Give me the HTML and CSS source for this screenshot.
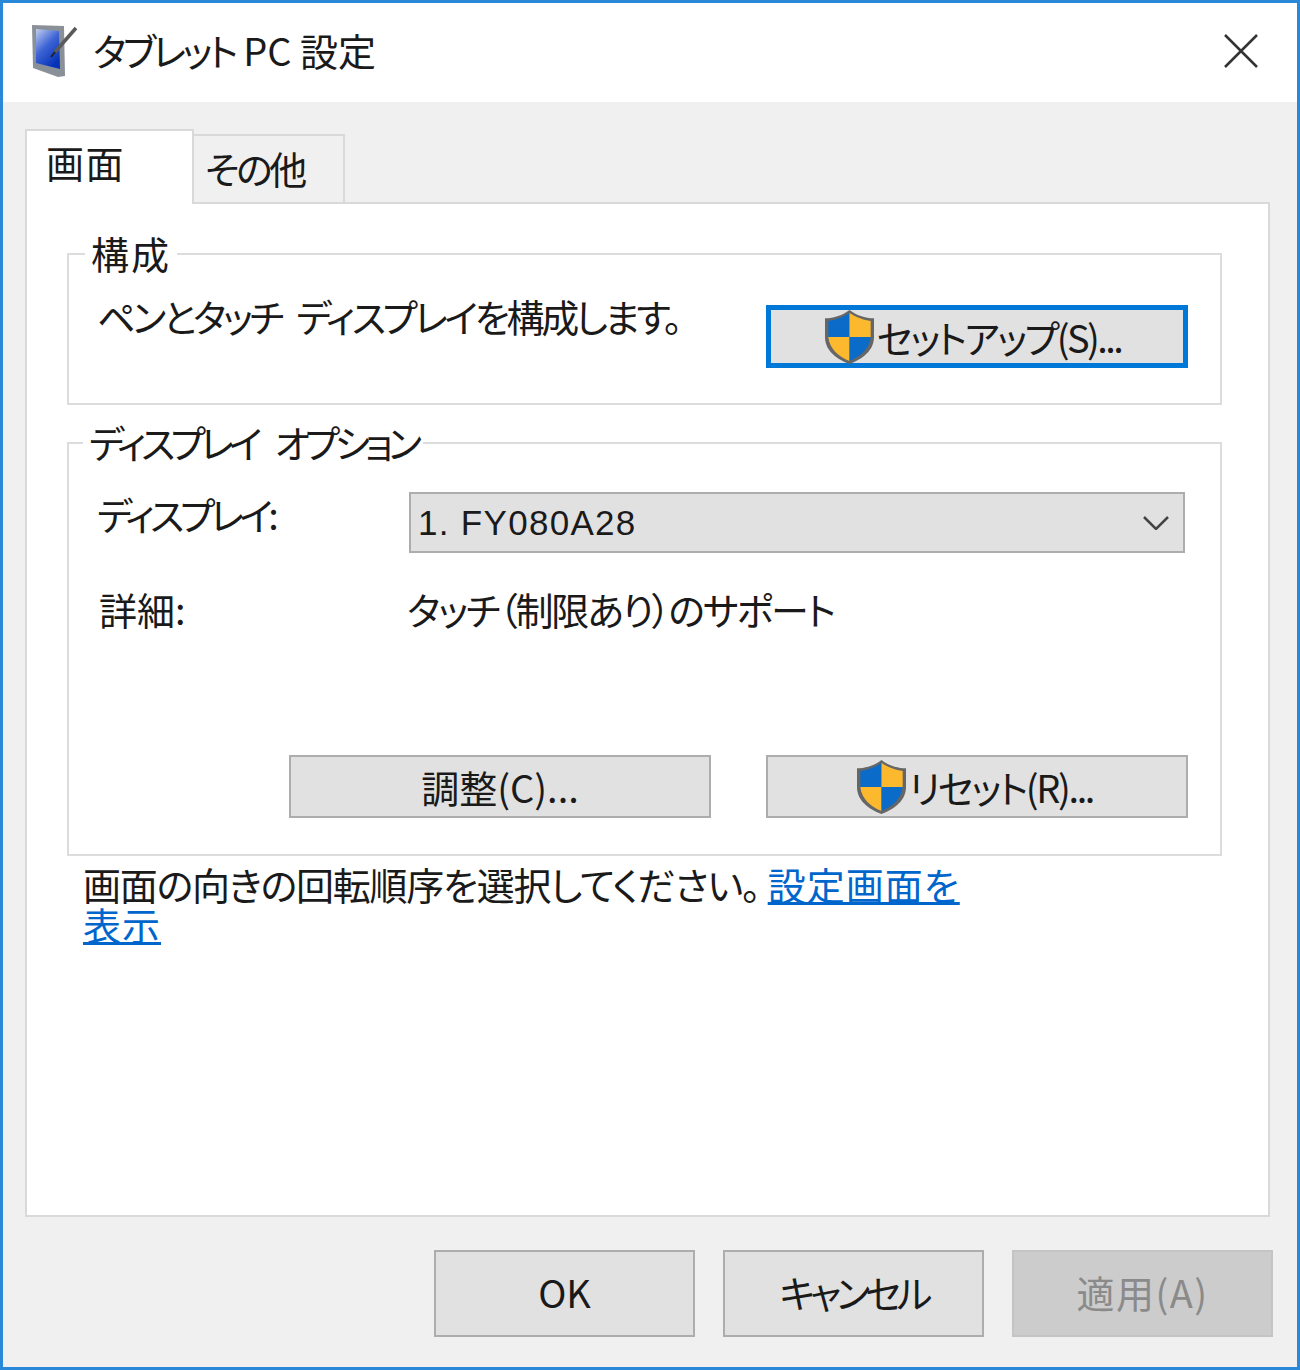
FILE: index.html
```html
<!DOCTYPE html>
<html lang="ja">
<head>
<meta charset="utf-8">
<title>タブレット PC 設定</title>
<link rel="stylesheet" href="styles.css">
</head>
<body>
<svg class="defs" width="0" height="0" aria-hidden="true">
  <defs>
    <symbol id="shield" viewBox="2 1 44 52" preserveAspectRatio="none">
      <path d="M24 1 C18 6 10 9 2 9 L2 27 C2 40 12 48 24 53 C36 48 46 40 46 27 L46 9 C38 9 30 6 24 1Z" fill="#666"/>
      <path d="M24 4 C18 8 11 11 5 11.500 L5 27 L24 27Z" fill="#0a6cc8"/>
      <path d="M24 4 C30 8 37 11 43 11.500 L43 27 L24 27Z" fill="#fdb92e"/>
      <path d="M5 27 L24 27 L24 50 C14 46 6 38 5 27Z" fill="#fdb92e"/>
      <path d="M43 27 L24 27 L24 50 C34 46 42 38 43 27Z" fill="#0a6cc8"/>
    </symbol>
  </defs>
</svg>
<div class="window">
  <header class="titlebar">
    <svg class="app-icon" viewBox="0 0 48 54" width="48" height="54">
      <defs>
        <linearGradient id="scr" x1="0" y1="0" x2="0.6" y2="1">
          <stop offset="0" stop-color="#c3cfee"/>
          <stop offset="0.5" stop-color="#3e64d4"/>
          <stop offset="1" stop-color="#0432b8"/>
        </linearGradient>
      </defs>
      <path d="M1 1 L33 2 L34 52 L27 53 L2 44Z" fill="#8a9098"/>
      <path d="M5 5 L28 7 L29 45 L5 39Z" fill="url(#scr)"/>
      <path d="M24 28 L45 4" stroke="#5a5a5a" stroke-width="3.500" fill="none"/>
      <path d="M24 28 L20 33" stroke="#222" stroke-width="2" fill="none"/>
    </svg>
    <h1 class="title"><span class="title-kana">タブレット</span> PC 設定</h1>
    <svg class="close" viewBox="0 0 34 34" width="34" height="34">
      <path d="M1 1 L33 33 M33 1 L1 33" stroke="#333" stroke-width="2.500" fill="none"/>
    </svg>
  </header>
  <main class="body">
    <nav class="tabs">
      <div class="tab active">画面</div>
      <div class="tab">その他</div>
    </nav>
    <section class="panel">
      <fieldset class="group group-setup">
        <legend class="legend legend-setup">構成</legend>
        <p class="setup-text">ペンとタッチ ディスプレイを構成します。</p>
        <button class="btn wide focus" type="button"><svg class="shield"><use href="#shield"/></svg>セットアップ(S)...</button>
      </fieldset>
      <fieldset class="group group-display">
        <legend class="legend legend-display">ディスプレイ オプション</legend>
        <div class="form">
          <span class="label label-display">ディスプレイ:</span>
          <div class="select">
            <span>1. FY080A28</span>
            <svg class="chevron" viewBox="0 0 26 14" width="26" height="14"><path d="M1 1 L13 13 L25 1" stroke="#444" stroke-width="2.500" fill="none"/></svg>
          </div>
          <span class="label label-detail">詳細:</span>
          <span class="detail">タッチ（制限あり）のサポート</span>
        </div>
        <div class="actions">
          <button class="btn wide" type="button">調整(C)...</button>
          <button class="btn wide reset" type="button"><svg class="shield"><use href="#shield"/></svg>リセット(R)...</button>
        </div>
      </fieldset>
      <p class="note">画面の向きの回転順序を選択してください。<a href="#" class="link">設定画面を<br>表示</a></p>
    </section>
    <footer class="footer">
      <button class="btn dlg" type="button">OK</button>
      <button class="btn dlg cancel" type="button">キャンセル</button>
      <button class="btn dlg disabled" type="button">適用(A)</button>
    </footer>
  </main>
</div>
</body>
</html>
```

FILE: styles.css
```css
* { box-sizing: border-box; }
html, body { margin: 0; padding: 0; }
body {
  width: 1300px;
  height: 1370px;
  overflow: hidden;
  background: #fff;
  font-family: "Noto Sans CJK JP", "Noto Sans", sans-serif;
  font-size: 38px;
  font-weight: 400;
  font-feature-settings: "palt";
  color: #1a1a1a;
}
.defs { position: absolute; }
.window {
  width: 1300px;
  height: 1370px;
  border: 3px solid #2a88d8;
  display: flex;
  flex-direction: column;
}
.titlebar {
  height: 99px;
  background: #fff;
  display: flex;
  align-items: center;
  padding: 0 39px 4px 28px;
}
.app-icon { flex: none; }
.title {
  margin: 0 0 0 14px;
  font-size: 38px;
  font-weight: 400;
  line-height: 42px;
  flex: 1;
  padding-bottom: 2px;
}
.title-kana { letter-spacing: -3.500px; }
.close { flex: none; }
.body {
  flex: 1;
  background: #f0f0f0;
  padding: 27px 27px 0 22px;
  display: flex;
  flex-direction: column;
}
.tabs {
  display: flex;
  align-items: flex-end;
  height: 75px;
  position: relative;
  z-index: 1;
  margin-bottom: -2px;
}
.tab {
  width: 151px;
  height: 70px;
  border: 2px solid #d9d9d9;
  border-left: none;
  background: #f0f0f0;
  padding-left: 11px;
  padding-top: 4px;
  line-height: 56px;
  letter-spacing: -3.300px;
}
.tab.active {
  width: 169px;
  height: 75px;
  border-left: 2px solid #d9d9d9;
  border-bottom: none;
  background: #fff;
  padding-left: 19px;
  padding-top: 3px;
  line-height: 56px;
  letter-spacing: 1.500px;
}
.panel {
  height: 1015px;
  background: #fff;
  border: 2px solid #d9d9d9;
  padding: 50px 46px 0 40px;
}
.group {
  margin: 0;
  border: 2px solid #dcdcdc;
  padding: 0;
  min-width: 0;
}
.legend {
  margin: 0;
  line-height: 38px;
  height: 40px;
  padding: 0 6px;
}
.legend-setup { margin-left: -12px; letter-spacing: 2px; }
.legend-display { margin-left: -14px; letter-spacing: -5px; word-spacing: 14px; }
.group-setup {
  height: 171px;
  margin-top: -20px;
  display: flow-root;
  padding: 0 32px 0 28px;
}
.setup-text {
  margin: 20px 0 0;
  line-height: 44px;
  float: left;
  letter-spacing: -3.300px;
  word-spacing: 10px;
}
.group-setup .btn {
  float: right;
  margin-top: 31px;
  padding-right: 8px;
  letter-spacing: -2.600px;
}
.group-display {
  height: 433px;
  margin-top: 18px;
  padding: 0 35px 0 28px;
}
.form {
  display: grid;
  grid-template-columns: 312px 1fr;
  grid-template-rows: 61px auto;
  row-gap: 34px;
  margin-top: 29px;
  align-items: center;
}
.label { line-height: 44px; }
.label-display { align-self: start; letter-spacing: -4.500px; }
.label-detail { padding-left: 2px; }
.detail { line-height: 44px; margin-left: -2px; letter-spacing: -2.100px; }
.select {
  height: 61px;
  background: #e1e1e1;
  border: 2px solid #adadad;
  display: flex;
  justify-content: space-between;
  align-items: center;
  padding: 0 14px 0 7px;
  font-family: "Liberation Sans", "Noto Sans CJK JP", sans-serif;
  font-size: 35px;
  letter-spacing: 1.300px;
}
.select .chevron { flex: none; }
.actions {
  display: flex;
  justify-content: flex-end;
  gap: 55px;
  margin-top: 124px;
  margin-right: -3px;
}
.btn {
  font: inherit;
  font-feature-settings: "palt";
  color: inherit;
  background: #e1e1e1;
  border: 2px solid #adadad;
  padding: 0;
  display: inline-flex;
  align-items: center;
  justify-content: center;
  line-height: 44px;
}
.btn.wide { width: 422px; height: 63px; }
.btn.focus { border: 5px solid #0078d7; }
.btn.reset { letter-spacing: -2.400px; padding-right: 4px; }
.shield { width: 49px; height: 54px; flex: none; margin-right: 3px; }
.dlg { width: 261px; height: 87px; padding-bottom: 3px; }
.dlg.cancel { letter-spacing: -4.800px; }
.dlg.disabled { background: #cccccc; border-color: #c4c4c4; color: #8a8a8a; letter-spacing: 1.400px; }
.note {
  margin: 8px 0 0 16px;
  line-height: 40px;
  letter-spacing: -1.250px;
}
.link { color: #0066cc; text-decoration: underline; margin-left: 8px; letter-spacing: 1px; }
.footer {
  display: flex;
  justify-content: flex-end;
  gap: 28px;
  margin-top: 33px;
  margin-right: -3px;
}
```
